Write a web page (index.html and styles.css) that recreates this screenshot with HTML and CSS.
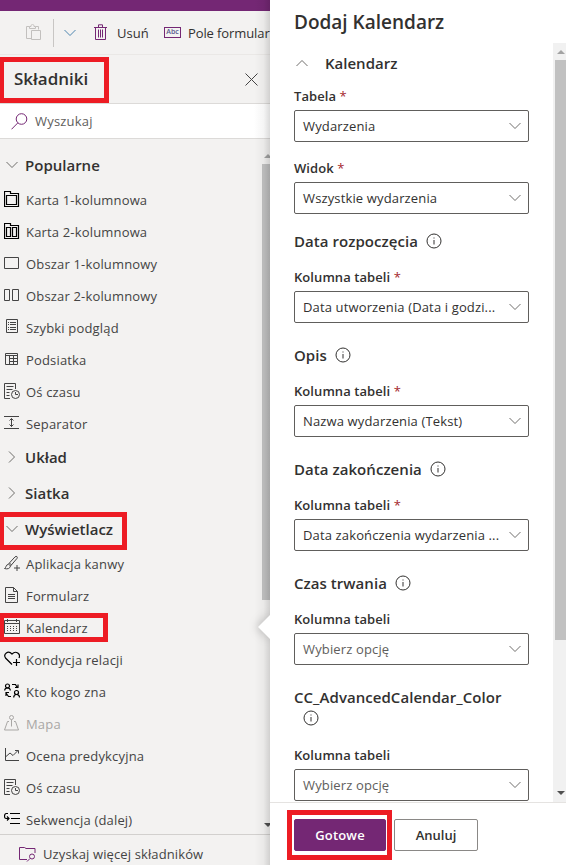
FILE: index.html
```html
<!DOCTYPE html>
<html lang="pl">
<head>
<meta charset="utf-8">
<title>Dodaj Kalendarz</title>
<link rel="stylesheet" href="styles.css">
</head>
<body>
<svg class="defs" aria-hidden="true">
  <symbol id="down" viewBox="0 0 12 8"><path d="M.5 1 6 6.500 11.500 1"/></symbol>
  <symbol id="right" viewBox="0 0 8 12"><path d="M1 .5 6.500 6 1 11.500"/></symbol>
  <symbol id="info" viewBox="0 0 16 16"><circle cx="8" cy="8" r="7"/><path d="M8 7v4.500M8 4.500v1"/></symbol>
  <symbol id="timeline" viewBox="0 0 16 16"><path d="M6 15.500H.5V.5h11V6M2.500 3.500h7M2.500 6.500h6M2.500 9.500h3M2.500 12.500h3"/><circle cx="11.500" cy="11.500" r="4"/><path d="M11.500 9v2.500H14"/></symbol>
</svg>
<div class="app">
  <main class="left">
    <div class="brand"></div>
    <div class="toolbar">
      <svg class="paste" width="16" height="17" viewBox="0 0 16 17"><path d="M5.500 14.500h-5v-12h3M9.500 2.500h3v3M3.500 4.500v-2h1.500c0-3 3-3 3 0h1.500v2zM5.500 6.500h9v9h-9z"/></svg>
      <span class="divider"></span>
      <svg class="chev blue" width="12" height="8"><use href="#down"/></svg>
      <svg class="trash" width="13" height="17" viewBox="0 0 13 17"><path d="M0 3.500h13M4.500 3V.8h4V3M1.500 3.500v12h10v-12M4.500 5.500v8M6.500 5.500v8M8.500 5.500v8"/></svg>
      <span class="t-del">Usuń</span>
      <span class="abc">Abc</span>
      <span class="t-field">Pole formular</span>
    </div>
    <header class="head">
      <h1>Składniki</h1>
      <svg class="close" width="13" height="13" viewBox="0 0 13 13"><path d="M.5.5l12 12M12.500.5l-12 12"/></svg>
      <span class="mark mark-head"></span>
    </header>
    <div class="search">
      <svg width="17" height="17" viewBox="0 0 17 17"><circle cx="10.500" cy="6" r="5.300"/><path d="M6.800 9.900.5 16.300"/></svg>
      <span>Wyszukaj</span>
    </div>
    <div class="body">
      <nav class="list">
        <h2><svg class="chev" width="12" height="8"><use href="#down"/></svg><span>Popularne</span></h2>
        <ul>
          <li><svg class="i black" viewBox="0 0 16 16"><path d="M.5.5h6v2h8v13H.5zM2.500 4.500h10v9h-10z"/></svg><span>Karta 1-kolumnowa</span></li>
          <li><svg class="i black" viewBox="0 0 16 16"><path d="M.5.5h6v2h8v13H.5zM2.500 4.500h4v9h-4zM8.500 4.500h4v9h-4z"/></svg><span>Karta 2-kolumnowa</span></li>
          <li><svg class="i" viewBox="0 0 16 16"><path d="M.5 2.500h14v11H.5z"/></svg><span>Obszar 1-kolumnowy</span></li>
          <li><svg class="i" viewBox="0 0 16 16"><path d="M.5 2.500h5v11h-5zM8.500 2.500h6v11h-6z"/></svg><span>Obszar 2-kolumnowy</span></li>
          <li><svg class="i" viewBox="0 0 16 16"><path d="M2.500.5h11v13h-11zM4 3.500h1M6 3.500h6M4 5.500h1M6 5.500h6M4 8.500h1M6 8.500h6M4 10.500h1M6 10.500h6"/></svg><span>Szybki podgląd</span></li>
          <li><svg class="i" viewBox="0 0 16 16"><path d="M1.500 2.500h12v11h-12zM1.500 4.500h12M5.500 4.500v9M9.500 4.500v9M5.500 7.500h8M5.500 10.500h8"/></svg><span>Podsiatka</span></li>
          <li><svg class="i"><use href="#timeline"/></svg><span>Oś czasu</span></li>
          <li><svg class="i" viewBox="0 0 16 16"><path d="M0 1.500h15M0 13.500h15M7.500 3.500v8M5.500 5.500l2-2 2 2M5.500 9.500l2 2 2-2"/></svg><span>Separator</span></li>
        </ul>
        <h2><svg class="chev side" width="8" height="12"><use href="#right"/></svg><span>Układ</span></h2>
        <h2><svg class="chev side" width="8" height="12"><use href="#right"/></svg><span>Siatka</span></h2>
        <h2><svg class="chev" width="12" height="8"><use href="#down"/></svg><span>Wyświetlacz</span><i class="mark mark-group"></i></h2>
        <ul>
          <li><svg class="i" viewBox="0 0 16 16"><path d="M.5 13.500c2-1 1-3.500 3.500-4L11 1.900c1.500-1.300 3 0 2 1.500L6.500 11c-.5 2.500-3 3.500-6 2.500zM4.500 9l2 2M5.500 8l2 2M13 10v6M10 13h6"/></svg><span>Aplikacja kanwy</span></li>
          <li><svg class="i" viewBox="0 0 16 16"><path d="M1.500.5h8l4 4v11h-12zM9.500.5v4h4M4 7.500h7M4 9.500h7M4 11.500h7"/></svg><span>Formularz</span></li>
          <li><svg class="i" viewBox="0 0 16 16"><path d="M.5 1.500h15v13H.5zM.5 4.500h15M3.500 0v3M12.500 0v3"/><path d="M3 7.500h11M3 9.500h11M3 11.500h11" stroke-dasharray="1 2"/></svg><span>Kalendarz</span><i class="mark mark-item"></i></li>
          <li><svg class="i black" viewBox="0 0 16 16"><path d="M8 13.500 1.500 7C-1 3 4-1 8 3c4-4 9 0 7 4M12.500 8v7M9 11.500h7"/></svg><span>Kondycja relacji</span></li>
          <li><svg class="i black" viewBox="0 0 16 16"><circle cx="3.500" cy="3" r="2"/><path d="M.7 7.500c0-3.500 5.600-3.500 5.600 0M8 1.500h3.500l2 3.500M11 4.500h3v-3"/><circle cx="12.500" cy="9.500" r="2"/><path d="M9.700 14.500c0-4 5.800-4 5.800 0M2 13V9.500h3M2 10l2.500 3.500H7"/></svg><span>Kto kogo zna</span></li>
          <li class="off"><svg class="i" viewBox="0 0 16 16"><circle cx="7.500" cy="2.500" r="2"/><path d="M7.500 4.500v7M5 6.500H3.500l-3 8.500h14l-3-8.500H10"/></svg><span>Mapa</span></li>
          <li><svg class="i" viewBox="0 0 16 16"><path d="M1.500 1v12.500H15M2 9.500l4-3.500 3 2.500 5-5M11 3.500h3.500v3"/></svg><span>Ocena predykcyjna</span></li>
          <li><svg class="i"><use href="#timeline"/></svg><span>Oś czasu</span></li>
          <li><svg class="i black" viewBox="0 0 16 16"><path d="M6 2.500h10M7 7.500h9M6 12.500h10M4 2.500H2C0 3 0 7.500 2 7.500h3M3 5.500l2 2-2 2"/></svg><span>Sekwencja (dalej)</span></li>
        </ul>
      </nav>
      <div class="lscroll"><b class="up"></b><div class="lthumb"></div><b class="dn"></b></div>
    </div>
    <footer class="more">
      <svg width="17" height="15" viewBox="0 0 17 15"><path d="M8 12.500H.5V.5h5l1.500 1h9V6"/><circle cx="13" cy="9.500" r="2.500"/><path d="M11 11.500 8 14.500"/></svg>
      <span>Uzyskaj więcej składników</span>
    </footer>
    <div class="shade"></div>
    <svg class="beak" width="12" height="24" viewBox="0 0 12 24"><path d="M12 0 0 12l12 12z"/></svg>
  </main>
  <aside class="panel">
    <h1 class="title"><span>Dodaj Kalendarz</span></h1>
    <div class="pbody">
      <div class="form">
        <div class="acc"><svg class="chev flip" width="12" height="8"><use href="#down"/></svg><span>Kalendarz</span></div>
        <label><span>Tabela</span> <em>*</em></label>
        <div class="select"><span>Wydarzenia</span><svg class="chev"><use href="#down"/></svg></div>
        <label class="second"><span>Widok</span> <em>*</em></label>
        <div class="select"><span>Wszystkie wydarzenia</span><svg class="chev"><use href="#down"/></svg></div>
        <h3 class="first"><span>Data rozpoczęcia</span><svg class="info"><use href="#info"/></svg></h3>
        <label><span>Kolumna tabeli</span> <em>*</em></label>
        <div class="select"><span>Data utworzenia (Data i godzi...</span><svg class="chev"><use href="#down"/></svg></div>
        <h3><span>Opis</span><svg class="info"><use href="#info"/></svg></h3>
        <label><span>Kolumna tabeli</span> <em>*</em></label>
        <div class="select"><span>Nazwa wydarzenia (Tekst)</span><svg class="chev"><use href="#down"/></svg></div>
        <h3><span>Data zakończenia</span><svg class="info"><use href="#info"/></svg></h3>
        <label><span>Kolumna tabeli</span> <em>*</em></label>
        <div class="select"><span>Data zakończenia wydarzenia ...</span><svg class="chev"><use href="#down"/></svg></div>
        <h3><span>Czas trwania</span><svg class="info"><use href="#info"/></svg></h3>
        <label><span>Kolumna tabeli</span></label>
        <div class="select empty"><span>Wybierz opcję</span><svg class="chev"><use href="#down"/></svg></div>
        <h3 class="wrap"><span>CC_AdvancedCalendar_Color</span><svg class="info"><use href="#info"/></svg></h3>
        <label><span>Kolumna tabeli</span></label>
        <div class="select empty"><span>Wybierz opcję</span><svg class="chev"><use href="#down"/></svg></div>
      </div>
      <div class="pscroll"><b class="up"></b><div class="pthumb"></div><b class="dn"></b></div>
    </div>
    <footer class="actions">
      <button class="primary">Gotowe<i class="mark mark-btn"></i></button>
      <button>Anuluj</button>
    </footer>
  </aside>
</div>
</body>
</html>
```
FILE: styles.css
```css
* { box-sizing: border-box; }
body { margin: 0; font: 13px/20px "Open Sans", "Noto Sans", sans-serif; color: #323130; }
h1, h2, h3, ul { margin: 0; padding: 0; font-weight: 600; list-style: none; }
ul { font-weight: 400; }
svg { display: block; flex: none; fill: none; stroke: #444; stroke-width: 1; }
span { white-space: nowrap; }
.defs { position: absolute; width: 0; height: 0; }
.app { display: grid; grid-template-columns: 270px 296px; height: 865px; overflow: hidden; }
.left { position: relative; display: flex; flex-direction: column; height: 865px; overflow: hidden; background: #f3f2f1; }
.brand { flex: none; height: 11px; background: #742774; }
.toolbar { flex: none; display: flex; align-items: center; height: 44px; padding-left: 26px; border-bottom: 1px solid #eae8e6; }
.toolbar > * { flex: none; }
.paste { stroke: #c2c0be; }
.divider { width: 1px; height: 28px; margin: 0 10px 0 11px; background: #c8c6c4; }
.chev.blue { margin-right: 18px; stroke: #3a78a8; }
.trash { stroke: #742774; }
.t-del { width: 32px; margin-left: 10px; }
.abc { width: 17px; height: 11px; margin: 0 7px 0 15px; border: 1px solid #742774; color: #56558c; font: 600 7px/8px "Open Sans", sans-serif; text-align: center; }
.t-field { letter-spacing: -.1px; }
.head { position: relative; flex: none; display: flex; align-items: center; justify-content: space-between; height: 49px; padding: 0 12px 0 14px; border-bottom: 1px solid #dcdad8; }
.head h1 { font-size: 17px; }
.search { flex: none; display: flex; align-items: center; gap: 7px; height: 35px; padding-left: 11px; border-bottom: 1px solid #dcdad8; background: #fff; color: #605e5c; letter-spacing: .2px; }
.search svg { stroke: #742774; }
.body { flex: 1; min-height: 0; display: flex; justify-content: space-between; }
.list { flex: 1; padding-top: 9px; }
.list h2 { position: relative; display: flex; align-items: center; height: 36px; gap: 7px; padding-left: 6px; font-size: 15px; }
.list h2 > span { margin-bottom: 2px; }
.list h2 > .chev { margin-bottom: 2px; }
.chev { width: 12px; height: 8px; stroke: #605e5c; stroke-width: .9; }
.chev.side { width: 8px; height: 12px; margin: 0 2px; }
.list li { position: relative; display: flex; align-items: center; height: 32px; gap: 6px; padding-left: 4px; color: #444; letter-spacing: .17px; }
.i { width: 16px; height: 16px; margin-bottom: 2px; }
.black { stroke: #000; stroke-width: 1.2; }
.list .off { color: #a9a7a5; }
.off svg { stroke: #a9a7a5; }
.lscroll { width: 8px; display: flex; flex-direction: column; align-items: flex-start; padding-top: 15px; overflow: hidden; }
.lthumb { width: 8px; height: 436px; margin-top: 6px; background: #c1c1c1; }
.up, .dn { flex: none; border: 4px solid transparent; width: 0; height: 0; border-top: 0; border-bottom-color: #a3a3a3; margin-left: 2px; }
.dn { border-top: 4px solid #505050; border-bottom: 0; margin-top: auto; margin-bottom: 7px; }
.more { flex: none; display: flex; align-items: center; gap: 7px; height: 31px; padding: 8px 0 0 19px; border-top: 1px solid #d2d0ce; color: #444; letter-spacing: .12px; }
.more svg { stroke: #742774; }
.shade { position: absolute; top: 0; right: 0; bottom: 0; width: 16px; background: linear-gradient(to right, transparent, rgba(0,0,0,.04) 60%, rgba(0,0,0,.14)); }
.beak { position: absolute; right: 0; top: 615px; fill: #fff; stroke: none; filter: drop-shadow(-1px 0 5px rgba(0,0,0,.25)); }
.mark { position: absolute; border: 5px solid #ed1c24; border-left-width: 4px; pointer-events: none; }
.mark-head { left: 0; top: 2px; width: 109px; height: 46px; }
.mark-group { left: 0; top: 0; width: 127px; height: 38px; }
.mark-item { left: 0; top: 1px; width: 108px; height: 29px; }
.panel { display: flex; flex-direction: column; height: 865px; background: #fff; }
.title { flex: none; height: 43px; padding-left: 24px; font-size: 19px; line-height: 45px; font-weight: 600; }
.pbody { flex: none; height: 759px; display: flex; justify-content: space-between; overflow: hidden; }
.form { width: 259px; padding-left: 24px; }
.acc { display: flex; align-items: center; gap: 17px; height: 39px; padding-left: 2px; font-size: 15px; font-weight: 600; }
.flip { transform: rotate(180deg); }
label { display: block; height: 28px; line-height: 28px; font-weight: 600; letter-spacing: .07px; }
label em { color: #a4262c; font-style: normal; font-weight: 400; }
.second { margin-top: 12px; }
.select { display: flex; align-items: center; justify-content: space-between; width: 235px; height: 32px; padding: 0 7px 0 8px; border: 1px solid #605e5c; border-radius: 2px; letter-spacing: .14px; }
.empty { color: #605e5c; }
h3 { display: flex; align-items: center; gap: 8px; height: 24px; margin: 20px 0 10px; font-size: 15px; letter-spacing: .05px; }
h3.first { margin-top: 15px; }
.info { width: 16px; height: 16px; stroke: #323130; }
h3.wrap { flex-wrap: wrap; align-content: flex-start; height: 44px; gap: 0; margin-bottom: 12px; }
.wrap span { width: 235px; line-height: 24px; }
.wrap .info { margin: 1px 0 0 9px; }
.pscroll { width: 13px; display: flex; flex-direction: column; align-items: center; padding: 7px 0 0 0; background: #f1f1f1; }
.pthumb { flex: none; width: 11px; height: 580px; margin: 6px 0 0 2px; background: #c1c1c1; }
.actions { flex: none; display: flex; gap: 8px; height: 63px; padding: 16px 0 0 24px; border-top: 1px solid #e5e3e1; }
button { position: relative; width: 84px; height: 32px; padding: 0; border: 1px solid #8a8886; border-radius: 2px; background: #fff; color: #323130; font: 600 13px/20px "Open Sans", sans-serif; }
.primary { width: 92px; border-color: #742774; background: #742774; color: #fff; letter-spacing: .2px; }
.mark-btn { left: -8px; top: -10px; width: 105px; height: 50px; border-left-width: 5px; }
```
